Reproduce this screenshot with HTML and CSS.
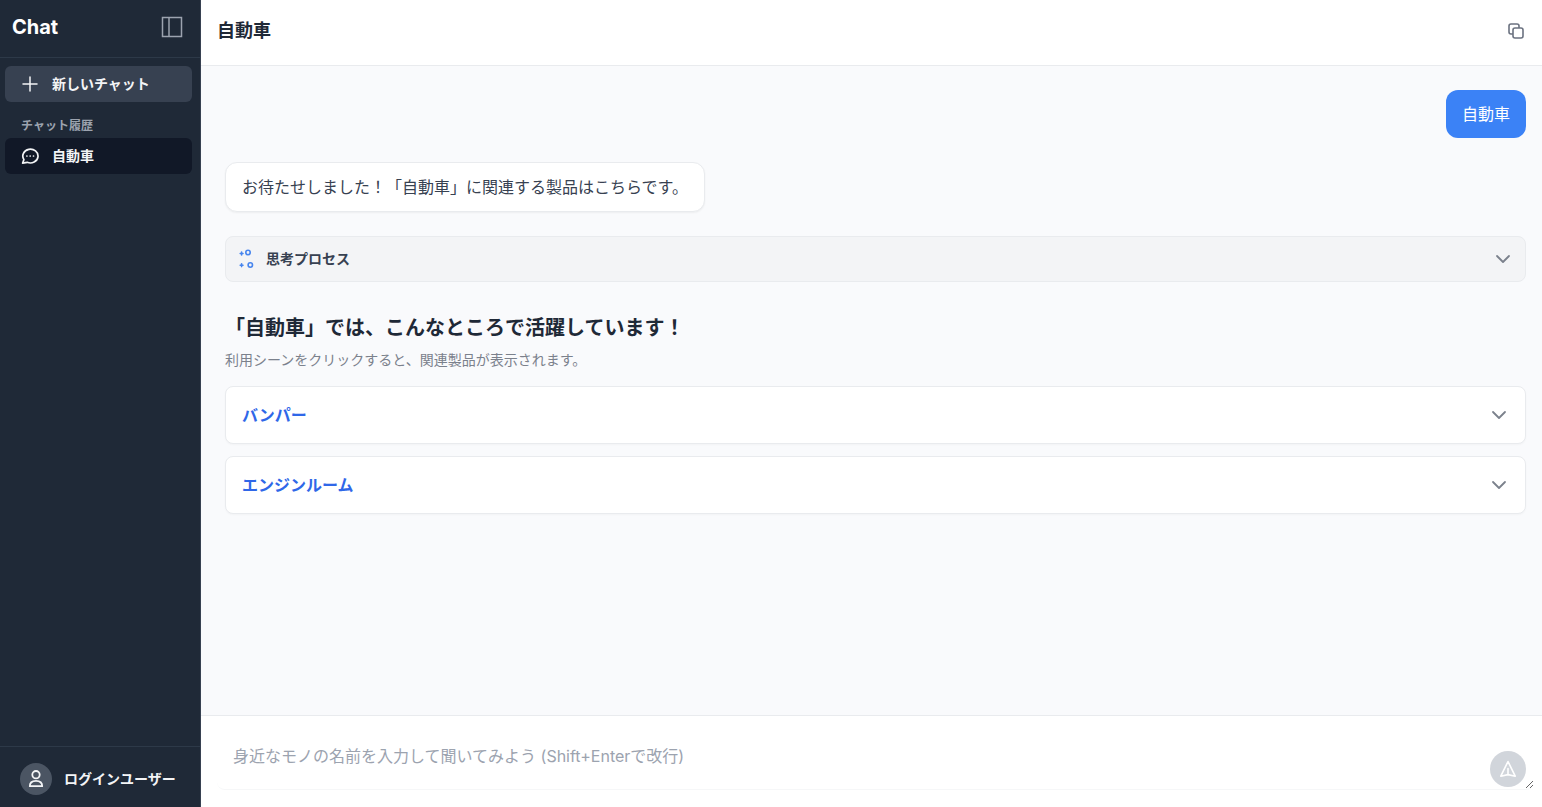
FILE: index.html
```html
<!DOCTYPE html>
<html lang="ja">

<head>
  <meta charset="UTF-8">
  <meta name="viewport" content="width=device-width, initial-scale=1.0">
  <title>Chat</title>
  <link rel="stylesheet" href="styles.css">
</head>

<body>
  <div class="app">
    <aside class="sidebar">
      <div class="sidebar-header">
        <h1 class="logo">Chat</h1>
        <button type="button" class="icon-button" aria-label="サイドバーを閉じる">
          <svg width="22" height="22" viewBox="0 0 22 22" fill="none" stroke="currentColor" stroke-width="1.5">
            <path d="M1.5 1.5h19v19h-19zM8 1.5v19" />
          </svg>
        </button>
      </div>

      <nav class="sidebar-nav">
        <button type="button" class="nav-item nav-new">
          <svg width="18" height="18" viewBox="0 0 18 18" fill="none" stroke="currentColor" stroke-width="1.5" stroke-linecap="round">
            <path d="M9 2v14M2 9h14" />
          </svg>
          新しいチャット
        </button>
        <h2 class="nav-title">チャット履歴</h2>
        <a href="#" class="nav-item nav-active">
          <svg width="18" height="18" viewBox="0 0 18 18" fill="none" stroke="currentColor" stroke-width="1.7" stroke-linecap="round" stroke-linejoin="round">
            <path d="M2.9 12.6A7.6 6.9 0 1 1 6.2 15.3L1.6 16.2z" />
            <path d="M5.9 9h.01M9.2 9h.01M12.5 9h.01" />
          </svg>
          自動車
        </a>
      </nav>

      <div class="sidebar-footer">
        <span class="avatar">
          <svg width="18" height="20" viewBox="0 0 18 20" fill="none" stroke="currentColor" stroke-width="1.8" stroke-linejoin="round">
            <circle cx="9" cy="5.7" r="3.7" />
            <path d="M2.8 17.2c0-3.4 2.6-5.4 6.2-5.4s6.2 2 6.2 5.4z" />
          </svg>
        </span>
        <span>ログインユーザー</span>
      </div>
    </aside>

    <main class="main">
      <header class="chat-header">
        <h2 class="chat-title">自動車</h2>
        <button type="button" class="icon-button copy-button" aria-label="コピー">
          <svg width="18" height="18" viewBox="0 0 18 18" fill="none" stroke="currentColor" stroke-width="1.6" stroke-linejoin="round">
            <rect x="6" y="6" width="10" height="10" rx="2" />
            <path d="M6 12H4a2 2 0 0 1-2-2V4a2 2 0 0 1 2-2h6a2 2 0 0 1 2 2v2" />
          </svg>
        </button>
      </header>

      <div class="messages">
        <p class="bubble bubble-user">自動車</p>
        <p class="bubble bubble-bot">お待たせしました！「自動車」に関連する製品はこちらです。</p>

        <button type="button" class="thinking" aria-expanded="false">
          <svg class="thinking-icon" width="18" height="20" viewBox="0 0 18 20" fill="none" stroke="currentColor" stroke-width="1.6" stroke-linecap="round">
            <circle cx="10" cy="3.5" r="2.2" />
            <circle cx="12.3" cy="16" r="2.2" />
            <path d="M3.6 3.1v2.8M2.2 4.5h2.8M3.6 14.8v2.8M2.2 16.2h2.8" />
          </svg>
          <span class="label">思考プロセス</span>
          <svg class="chevron" width="20" height="20" viewBox="0 0 20 20" fill="none" stroke="currentColor" stroke-width="1.8" stroke-linecap="round" stroke-linejoin="round">
            <path d="M4 7l6 6 6-6" />
          </svg>
        </button>

        <section class="scenes">
          <h2 class="scenes-title">「自動車」では、こんなところで活躍しています！</h2>
          <p class="scenes-text">利用シーンをクリックすると、関連製品が表示されます。</p>
          <div class="scene-list">
            <button type="button" class="scene" aria-expanded="false">
              <span class="label">バンパー</span>
              <svg class="chevron" width="20" height="20" viewBox="0 0 20 20" fill="none" stroke="currentColor" stroke-width="1.8" stroke-linecap="round" stroke-linejoin="round">
                <path d="M4 7l6 6 6-6" />
              </svg>
            </button>
            <button type="button" class="scene" aria-expanded="false">
              <span class="label">エンジンルーム</span>
              <svg class="chevron" width="20" height="20" viewBox="0 0 20 20" fill="none" stroke="currentColor" stroke-width="1.8" stroke-linecap="round" stroke-linejoin="round">
                <path d="M4 7l6 6 6-6" />
              </svg>
            </button>
          </div>
        </section>
      </div>

      <form class="composer">
        <textarea class="composer-input" aria-label="メッセージ" placeholder="身近なモノの名前を入力して聞いてみよう (Shift+Enterで改行)"></textarea>
        <button type="button" class="send-button" aria-label="送信">
          <svg width="20" height="20" viewBox="0 0 20 20" fill="none" stroke="currentColor" stroke-width="1.6" stroke-linecap="round" stroke-linejoin="round">
            <path d="M10 2.5L17.2 17.2L10 15.6L2.8 17.2zM10 15.6V9.5" />
          </svg>
        </button>
      </form>
    </main>
  </div>
</body>

</html>
```
FILE: styles.css
```css
* {
  box-sizing: border-box;
}

body {
  margin: 0;
  font-family: Inter, "Noto Sans CJK JP", sans-serif;
  font-size: 16px;
  line-height: 24px;
  color: #374151;
}

h1,
h2,
p {
  margin: 0;
}

button,
textarea {
  font: inherit;
  color: inherit;
}

button {
  border: 0;
  padding: 0;
  background: none;
  text-align: left;
  cursor: pointer;
}

svg {
  display: block;
  flex-shrink: 0;
}

.app {
  display: flex;
  height: 100vh;
}

/* sidebar */
.sidebar {
  display: flex;
  flex-direction: column;
  flex-shrink: 0;
  width: 201px;
  background-color: #1f2937;
  border-right: 1px solid #374151;
  color: #f3f4f6;
  font-size: 14px;
  font-weight: 600;
}

.sidebar-header {
  display: flex;
  align-items: center;
  justify-content: space-between;
  padding: 13px 17px 16px 12px;
  border-bottom: 1px solid #2d3948;
}

.logo {
  font-size: 20px;
  font-weight: 700;
  line-height: 28px;
  color: #fff;
}

.icon-button {
  color: #9ca3af;
}

.sidebar-nav {
  flex: 1;
  padding: 8px 8px 8px 5px;
}

.nav-item {
  display: flex;
  align-items: center;
  gap: 13px;
  width: 100%;
  height: 36px;
  padding: 0 16px;
  border-radius: 6px;
  color: #f3f4f6;
  text-decoration: none;
}

.nav-new {
  background-color: #374151;
}

.nav-active {
  background-color: #111827;
}

.nav-title {
  padding: 16px 16px 4px;
  font-size: 12px;
  font-weight: 600;
  line-height: 16px;
  color: #9ca3af;
}

.sidebar-footer {
  display: flex;
  align-items: center;
  gap: 12px;
  padding: 16px 20px 12px;
  border-top: 1px solid #2d3948;
}

.avatar {
  display: flex;
  align-items: center;
  justify-content: center;
  width: 32px;
  height: 32px;
  border-radius: 50%;
  background-color: #4b5563;
}

/* chat */
.main {
  display: flex;
  flex: 1;
  flex-direction: column;
  min-width: 0;
}

.chat-header {
  display: flex;
  align-items: center;
  justify-content: space-between;
  padding: 17px 17px 20px 16px;
  border-bottom: 1px solid #e9ebee;
}

.chat-title {
  font-size: 18px;
  font-weight: 600;
  line-height: 28px;
  color: #1f2937;
}

.copy-button {
  color: #6b7280;
}

.messages {
  display: flex;
  flex: 1;
  flex-direction: column;
  gap: 24px;
  min-height: 0;
  padding: 24px 16px 24px 24px;
  overflow-y: auto;
  background-color: #f9fafc;
}

.bubble {
  padding: 12px 16px;
  border-radius: 12px;
}

.bubble-user {
  align-self: flex-end;
  background-color: #3b82f6;
  color: #fff;
}

.bubble-bot {
  align-self: flex-start;
  background-color: #fff;
  border: 1px solid #e9ebee;
  box-shadow: 0 1px 2px rgba(0, 0, 0, 0.05);
}

.label {
  flex: 1;
}

.chevron {
  color: #7b818c;
}

.thinking {
  display: flex;
  align-items: center;
  gap: 10px;
  padding: 10px 12px;
  border: 1px solid #e9ebee;
  border-radius: 8px;
  background-color: #f3f4f6;
  font-size: 14px;
  font-weight: 600;
}

.thinking-icon {
  color: #4785ee;
}

.scenes {
  padding-top: 8px;
}

.scenes-title {
  font-size: 20px;
  font-weight: 600;
  line-height: 28px;
  color: #1f2937;
}

.scenes-text {
  margin: 8px 0 16px;
  font-size: 14px;
  line-height: 20px;
  color: #7b818c;
}

.scene-list {
  display: flex;
  flex-direction: column;
  gap: 12px;
}

.scene {
  display: flex;
  align-items: center;
  padding: 16px;
  border: 1px solid #e9ebee;
  border-radius: 8px;
  background-color: #fff;
  box-shadow: 0 1px 2px rgba(0, 0, 0, 0.03);
  color: #2f67e8;
  font-weight: 600;
}

/* composer */
.composer {
  position: relative;
  padding: 8px 8px 17px 16px;
  border-top: 1px solid #e9ebee;
  background-color: #fff;
}

.composer-input {
  display: block;
  width: 100%;
  height: 66px;
  padding: 20px 60px 12px 16px;
  border: 0;
  border-bottom: 1px solid #f6f7f8;
  border-radius: 8px;
  outline: none;
  resize: vertical;
}

.composer-input::placeholder {
  color: #9ca3af;
}

/* sits over the right end of the text box */
.send-button {
  position: absolute;
  right: 16px;
  bottom: 20px;
  display: flex;
  align-items: center;
  justify-content: center;
  width: 36px;
  height: 36px;
  border-radius: 50%;
  background-color: #d1d5db;
  color: #fff;
}
```
